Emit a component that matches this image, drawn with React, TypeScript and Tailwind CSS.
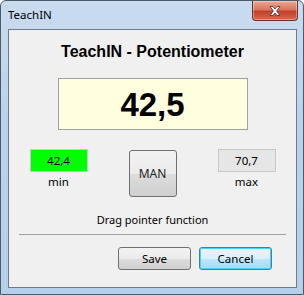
import React from 'react';

const ui = { fontFamily: '"Noto Sans", "Open Sans", sans-serif' };
const arial = { fontFamily: '"Liberation Sans", Arial, sans-serif' };

function CloseButton() {
  return (
    <div className="flex h-[20px] w-[46px] items-center justify-center rounded-b-[4px] border border-t-0 border-[#6b3428] bg-[linear-gradient(to_bottom,#e9a896_0%,#d9775f_45%,#c2412a_55%,#d8684b_100%)] shadow-[inset_0_0_0_1px_rgba(255,255,255,0.35)]">
      <svg width="14" height="12" viewBox="0 0 14 12">
        <path
          d="M2 1.5 L5 1.5 L7 4 L9 1.5 L12 1.5 L8.6 6 L12 10.5 L9 10.5 L7 8 L5 10.5 L2 10.5 L5.4 6 Z"
          fill="#fff"
          stroke="#4a2a24"
          strokeWidth="0.8"
          strokeLinejoin="round"
        />
      </svg>
    </div>
  );
}

function ValueBox({ value, label, green }: { value: string; label: string; green?: boolean }) {
  return (
    <div className="flex w-[58px] flex-col items-center">
      <div
        className={
          'flex h-[23px] w-full items-center justify-center border border-[#c8c8c8] text-[11.5px] text-black ' +
          (green ? 'bg-[#00ff00]' : 'bg-[#e6e6e6]')
        }
        style={ui}
      >
        {value}
      </div>
      <div className="mt-[2px] text-[11.5px] leading-[16px] text-black" style={ui}>
        {label}
      </div>
    </div>
  );
}

export default function App() {
  return (
    <div className="flex h-[295px] w-[304px] flex-col rounded-t-[6px] border border-[#4d5a68] bg-[linear-gradient(to_bottom,#c9dbef_0%,#bcd2ec_40%,#b6cfea_100%)]">
      {/* title bar */}
      <div className="flex h-[28px] items-start justify-between">
        <div className="pl-[7px] pt-[6px] text-[11.5px] leading-[16px] text-black" style={ui}>
          TeachIN
        </div>
        <div className="mr-[5px]">
          <CloseButton />
        </div>
      </div>

      {/* client area */}
      <div className="mb-[6px] ml-[7px] mr-[6px] flex flex-1 flex-col items-center border border-[#6e7c8a] bg-[#f0f0f0]">
        <div className="mt-[12px] text-[16px] font-bold leading-[20px] text-black" style={arial}>
          TeachIN - Potentiometer
        </div>

        <div className="mt-[16px] flex h-[52px] w-[190px] items-center justify-center border border-[#a0a0a0] bg-[#ffffe0]">
          <span className="text-[33px] font-bold leading-none text-black" style={arial}>
            42,5
          </span>
        </div>

        <div className="mt-[19px] flex items-start gap-[41px]">
          <ValueBox value="42,4" label="min" green />
          <div
            className="mt-[1px] flex h-[47px] w-[48px] items-center justify-center rounded-[3px] border border-[#707070] bg-[linear-gradient(to_bottom,#f2f2f2_0%,#ebebeb_50%,#dddddd_51%,#cfcfcf_100%)] text-[12px] text-[#222]"
            style={ui}
          >
            MAN
          </div>
          <ValueBox value="70,7" label="max" />
        </div>

        <div className="mt-[15px] text-[11px] leading-[16px] text-black" style={ui}>
          Drag pointer function
        </div>

        <div className="mt-[6px] h-px w-[267px] bg-[#a0a0a0]" />

        <div className="mt-[12px] flex w-full justify-end gap-[8px] pr-[24px]">
          <div
            className="flex h-[23px] w-[73px] items-center justify-center rounded-[3px] border border-[#707070] bg-[linear-gradient(to_bottom,#f2f2f2_0%,#ebebeb_50%,#dddddd_51%,#cfcfcf_100%)] text-[11.5px] text-black"
            style={ui}
          >
            Save
          </div>
          <div
            className="flex h-[23px] w-[73px] items-center justify-center rounded-[3px] border border-[#3c7fb1] bg-[linear-gradient(to_bottom,#eaf6fd_0%,#d9f0fc_50%,#bee6fd_51%,#a7d9f5_100%)] text-[11.5px] text-black shadow-[inset_0_0_0_1px_#48d4f6]"
            style={ui}
          >
            Cancel
          </div>
        </div>
      </div>
    </div>
  );
}
